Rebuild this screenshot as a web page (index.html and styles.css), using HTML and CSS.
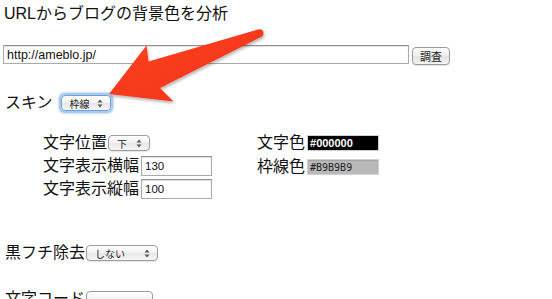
FILE: index.html
```html
<!DOCTYPE html>
<html lang="ja">
<head>
<meta charset="utf-8">
<link rel="stylesheet" href="styles.css">
</head>
<body>
<div class="page">
  <h1 class="title">URLからブログの背景色を分析</h1>
  <div class="url-row">
    <span class="input url">http://ameblo.jp/</span>
    <span class="button">調査</span>
  </div>
  <div class="skin-row">
    <span class="label">スキン</span>
    <span class="select focused w-skin">枠線<svg class="updown" width="6" height="9" viewBox="0 0 6 9"><path d="M3 0.5 L5.5 3.5 H0.5Z M3 8.5 L5.5 5.5 H0.5Z" fill="#555"/></svg></span>
  </div>
  <div class="options">
    <div class="col left">
      <div class="row"><span class="label">文字位置</span><span class="select w-pos">下<svg class="updown" width="6" height="9" viewBox="0 0 6 9"><path d="M3 0.5 L5.5 3.5 H0.5Z M3 8.5 L5.5 5.5 H0.5Z" fill="#555"/></svg></span></div>
      <div class="row"><span class="label">文字表示横幅</span><span class="input num">130</span></div>
      <div class="row"><span class="label">文字表示縦幅</span><span class="input num">100</span></div>
    </div>
    <div class="col right">
      <div class="row"><span class="label">文字色</span><span class="input color black">#000000</span></div>
      <div class="row"><span class="label">枠線色</span><span class="input color gray">#B9B9B9</span></div>
    </div>
  </div>
  <div class="row solo edge-row">
    <span class="label">黒フチ除去</span><span class="select w-edge">しない<svg class="updown" width="6" height="9" viewBox="0 0 6 9"><path d="M3 0.5 L5.5 3.5 H0.5Z M3 8.5 L5.5 5.5 H0.5Z" fill="#555"/></svg></span>
  </div>
  <div class="row solo code-row">
    <span class="label">文字コード</span><span class="select w-code">&nbsp;</span>
  </div>
</div>
<svg class="arrow" width="552" height="299" viewBox="0 0 552 299">
  <defs>
    <linearGradient id="ag" x1="0" y1="0" x2="1" y2="1">
      <stop offset="0" stop-color="#ff4424"/>
      <stop offset="1" stop-color="#f03014"/>
    </linearGradient>
    <filter id="sh" x="-10%" y="-10%" width="130%" height="140%">
      <feDropShadow dx="1" dy="2" stdDeviation="1.5" flood-color="#000" flood-opacity="0.3"/>
    </filter>
  </defs>
  <path d="M109 94 L146.5 45.5 L148.5 61.5 L258 29.5 Q263 28.5 263.5 33 Q263.5 36 260 37.5 L160 88 L173.5 101.5 Z" fill="url(#ag)" filter="url(#sh)"/>
</svg>
</body>
</html>
```
FILE: styles.css
```css
html, body {
  margin: 0;
  padding: 0;
  background: #fff;
}
body {
  font-family: "Liberation Sans", "Noto Sans CJK JP", sans-serif;
  color: #111;
  width: 552px;
  height: 299px;
  overflow: hidden;
  position: relative;
}
.page {
  padding: 3px 0 0 3px;
}
.title {
  margin: 0;
  font-weight: normal;
  font-size: 16px;
  line-height: 22px;
  height: 22px;
  padding-left: 1px;
}
.url-row {
  margin-top: 20px;
  display: flex;
  align-items: flex-start;
  gap: 3px;
  height: 20px;
}
.input {
  display: inline-flex;
  align-items: center;
  box-sizing: border-box;
  border: 1px solid #a9a9a9;
  border-top-color: #8f8f8f;
  box-shadow: inset 0 1px 1px rgba(0,0,0,0.12);
  background: #fff;
  font-size: 12px;
  padding: 0 3px;
  color: #111;
  white-space: nowrap;
}
.url {
  width: 406px;
  height: 19px;
  font-size: 12.5px;
}
.button {
  margin-top: 2px;
  display: inline-flex;
  align-items: center;
  justify-content: center;
  box-sizing: border-box;
  width: 38px;
  height: 18px;
  border: 1px solid #9a9a9a;
  border-radius: 4px;
  background: linear-gradient(#ffffff, #ececec 50%, #e2e2e2 51%, #f4f4f4);
  font-size: 11px;
  color: #222;
  box-shadow: 0 1px 1px rgba(0,0,0,0.12);
}
.skin-row {
  margin-top: 28px;
  display: flex;
  align-items: center;
  height: 20px;
  padding-left: 2px;
}
.label {
  font-size: 16px;
  line-height: 20px;
  white-space: nowrap;
}
.skin-row .label {
  margin-right: 7px;
}
.select {
  position: relative;
  display: inline-flex;
  align-items: center;
  box-sizing: border-box;
  height: 16px;
  border: 1px solid #9c9c9c;
  border-radius: 4px;
  background: linear-gradient(#ffffff, #f2f2f2 50%, #e6e6e6 51%, #f7f7f7);
  font-size: 10px;
  padding-left: 8px;
  color: #222;
  box-shadow: 0 1px 1px rgba(0,0,0,0.1);
  margin-left: 1px;
}
.select .updown {
  position: absolute;
  right: 7px;
  top: 3px;
}
.focused {
  border-color: #6f9fd6;
  box-shadow: 0 0 0 2px #a9c9ef, 0 0 2px 3px rgba(120,170,230,0.4);
}
.w-skin { width: 50px; height: 16px; }
.w-pos { width: 42px; }
.w-edge { width: 72px; }
.w-code { width: 67px; }
.options {
  margin-top: 20px;
  padding-left: 40px;
  display: flex;
}
.col {
  display: flex;
  flex-direction: column;
  gap: 3px;
}
.col.left {
  width: 214px;
}
.row {
  display: flex;
  align-items: center;
  height: 20px;
}
.num {
  width: 71px;
  height: 20px;
  font-size: 11.5px;
  margin-left: 2px;
}
.right .label {
  margin-right: 2px;
}
.right.col {
  gap: 4px;
}
.color {
  width: 72px;
  height: 16px;
  font-family: "DejaVu Sans Mono", monospace;
  font-size: 10px;
  padding-left: 2px;
  border-color: #d0d0d0;
}
.black {
  background: #000;
  color: #fff;
  font-weight: bold;
  font-family: "Liberation Sans", sans-serif;
  font-size: 11px;
}
.gray {
  background: #b9b9b9;
  color: #222;
}
.solo {
  padding-left: 2px;
}
.edge-row {
  margin-top: 44px;
}
.code-row {
  margin-top: 26px;
}
.arrow {
  position: absolute;
  left: 0;
  top: 0;
  pointer-events: none;
}
```
